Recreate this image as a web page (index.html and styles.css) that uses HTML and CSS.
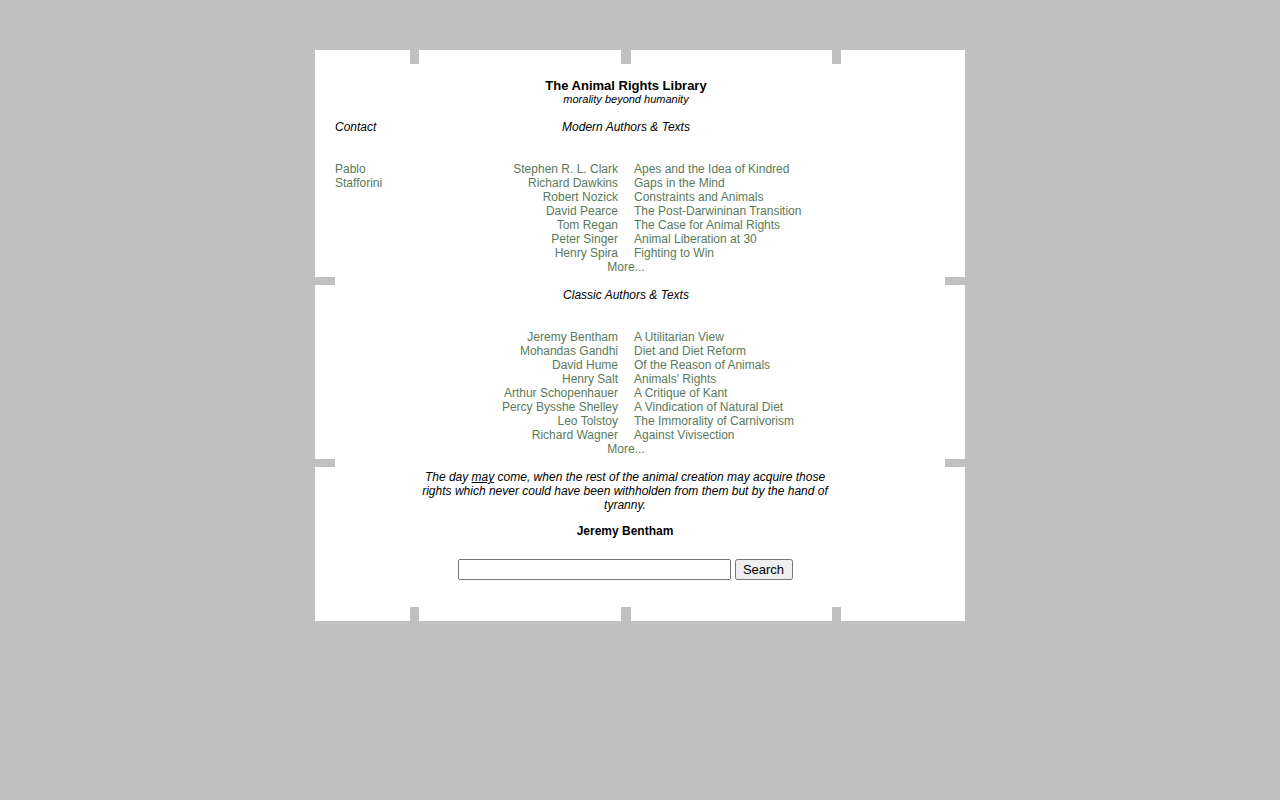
FILE: index.html
```html
<!DOCTYPE html>
<html>
<head>
<meta charset="utf-8">
<title>The Animal Rights Library</title>
<link rel="stylesheet" href="styles.css">
</head>
<body>
<div class="box">
  <span class="tab tab-t1"></span>
  <span class="tab tab-t2"></span>
  <span class="tab tab-t3"></span>
  <span class="tab tab-b1"></span>
  <span class="tab tab-b2"></span>
  <span class="tab tab-b3"></span>
  <span class="tab tab-l1"></span>
  <span class="tab tab-l2"></span>
  <span class="tab tab-r1"></span>
  <span class="tab tab-r2"></span>

  <div class="main">
    <div class="side">
      <div class="side-head">Contact</div>
      <a class="side-link" href="#">Pablo Stafforini</a>
    </div>
    <div class="center">
      <div class="title">The Animal Rights Library</div>
      <div class="subtitle">morality beyond humanity</div>

      <div class="heading">Modern Authors &amp; Texts</div>
      <div class="list">
        <a class="author" href="#">Stephen R. L. Clark</a><a class="work" href="#">Apes and the Idea of Kindred</a>
        <a class="author" href="#">Richard Dawkins</a><a class="work" href="#">Gaps in the Mind</a>
        <a class="author" href="#">Robert Nozick</a><a class="work" href="#">Constraints and Animals</a>
        <a class="author" href="#">David Pearce</a><a class="work" href="#">The Post-Darwininan Transition</a>
        <a class="author" href="#">Tom Regan</a><a class="work" href="#">The Case for Animal Rights</a>
        <a class="author" href="#">Peter Singer</a><a class="work" href="#">Animal Liberation at 30</a>
        <a class="author" href="#">Henry Spira</a><a class="work" href="#">Fighting to Win</a>
      </div>
      <a class="more" href="#">More...</a>

      <div class="heading heading-2">Classic Authors &amp; Texts</div>
      <div class="list">
        <a class="author" href="#">Jeremy Bentham</a><a class="work" href="#">A Utilitarian View</a>
        <a class="author" href="#">Mohandas Gandhi</a><a class="work" href="#">Diet and Diet Reform</a>
        <a class="author" href="#">David Hume</a><a class="work" href="#">Of the Reason of Animals</a>
        <a class="author" href="#">Henry Salt</a><a class="work" href="#">Animals' Rights</a>
        <a class="author" href="#">Arthur Schopenhauer</a><a class="work" href="#">A Critique of Kant</a>
        <a class="author" href="#">Percy Bysshe Shelley</a><a class="work" href="#">A Vindication of Natural Diet</a>
        <a class="author" href="#">Leo Tolstoy</a><a class="work" href="#">The Immorality of Carnivorism</a>
        <a class="author" href="#">Richard Wagner</a><a class="work" href="#">Against Vivisection</a>
      </div>
      <a class="more" href="#">More...</a>

      <p class="quote">The day <u>may</u> come, when the rest of the animal creation may acquire those rights which never could have been withholden from them but by the hand of tyranny.</p>
      <p class="quote-author">Jeremy Bentham</p>

      <form class="search" onsubmit="return false;">
        <input class="search-input" type="text">
        <button class="search-btn" type="submit">Search</button>
      </form>
    </div>
  </div>
</div>
</body>
</html>
```

FILE: styles.css
```css
html, body {
  margin: 0;
  padding: 0;
}

body {
  background: #c0c0c0;
  font-family: "Liberation Sans", Arial, sans-serif;
  font-size: 12px;
  line-height: 14px;
  color: #000;
}

a {
  color: #5a7a5a;
  text-decoration: none;
}

.box {
  position: relative;
  width: 650px;
  margin: 50px auto 0;
  background: #fff;
  padding: 29px 0 41px;
}

.tab {
  position: absolute;
  background: #c0c0c0;
}

.tab-t1, .tab-t2, .tab-t3 { top: 0; height: 14px; }
.tab-b1, .tab-b2, .tab-b3 { bottom: 0; height: 14px; }
.tab-t1, .tab-b1 { left: 95px; width: 9px; }
.tab-t2, .tab-b2 { left: 306px; width: 10px; }
.tab-t3, .tab-b3 { left: 517px; width: 9px; }

.tab-l1, .tab-l2 { left: 0; width: 20px; height: 8px; }
.tab-r1, .tab-r2 { right: 0; width: 20px; height: 8px; }
.tab-l1, .tab-r1 { top: 227px; }
.tab-l2, .tab-r2 { top: 409px; }

.main {
  display: flex;
  margin: 0 109px 0 20px;
}

.side {
  flex: none;
  width: 61px;
  padding-top: 41px;
}

.side-head {
  font-style: italic;
}

.side-link {
  display: block;
  margin-top: 28px;
}

.center {
  flex: 1;
  text-align: center;
}

.title {
  font-size: 13px;
  font-weight: bold;
  line-height: 14px;
}

.subtitle {
  font-size: 11px;
  font-style: italic;
  line-height: 12px;
}

.heading {
  font-style: italic;
  margin-top: 15px;
}

.heading-2 {
  margin-top: 14px;
}

.list {
  display: grid;
  grid-template-columns: 1fr 1fr;
  column-gap: 16px;
  margin-top: 28px;
}

.author {
  text-align: right;
  white-space: nowrap;
}

.work {
  text-align: left;
  white-space: nowrap;
}

.more {
  display: block;
}

.quote {
  margin: 14px 22px 0 20px;
  font-style: italic;
}

.quote-author {
  margin: 12px 2px 0 0;
  font-weight: bold;
}

.search {
  display: flex;
  justify-content: center;
  gap: 4px;
  margin: 21px 0 0;
  padding-right: 2px;
}

.search-input {
  box-sizing: border-box;
  width: 273px;
  height: 21px;
  margin: 0;
  font-family: "Liberation Sans", Arial, sans-serif;
  font-size: 13px;
}

.search-btn {
  box-sizing: border-box;
  width: 58px;
  height: 21px;
  margin: 0;
  padding: 0;
  font-family: "Liberation Sans", Arial, sans-serif;
  font-size: 13px;
}
```
